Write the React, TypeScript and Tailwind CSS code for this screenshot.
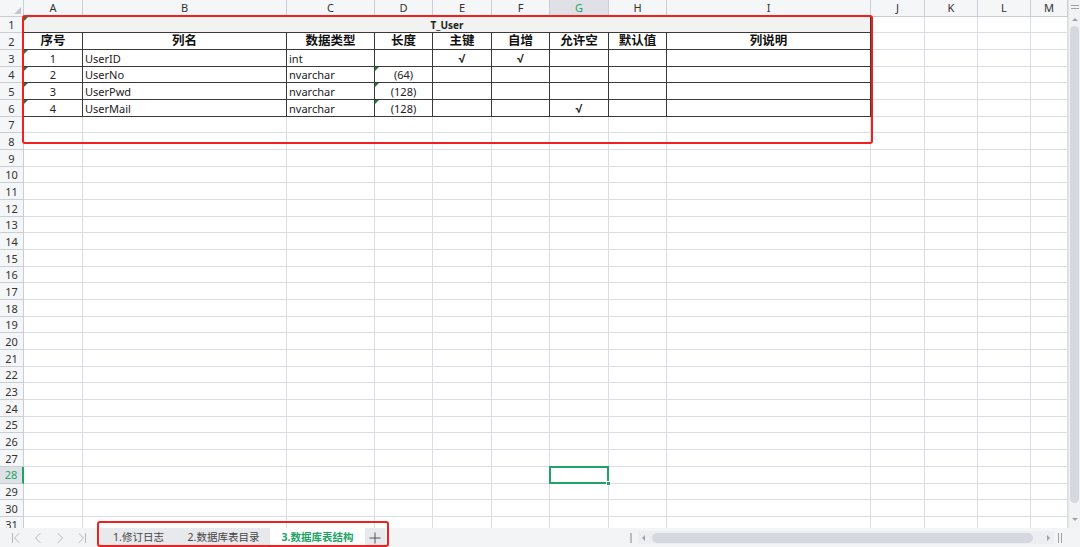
import React from 'react';

const COLS = ['A', 'B', 'C', 'D', 'E', 'F', 'G', 'H', 'I', 'J', 'K', 'L', 'M'];
const ROW_COUNT = 31;

interface Campo {
  seq: string;
  name: string;
  type: string;
  len: string;
  pk: string;
  inc: string;
  nul: string;
}

const HEADERS = ['序号', '列名', '数据类型', '长度', '主键', '自增', '允许空', '默认值', '列说明'];

const CAMPOS: Campo[] = [
  { seq: '1', name: 'UserID', type: 'int', len: '', pk: '√', inc: '√', nul: '' },
  { seq: '2', name: 'UserNo', type: 'nvarchar', len: '(64)', pk: '', inc: '', nul: '' },
  { seq: '3', name: 'UserPwd', type: 'nvarchar', len: '(128)', pk: '', inc: '', nul: '' },
  { seq: '4', name: 'UserMail', type: 'nvarchar', len: '(128)', pk: '', inc: '', nul: '√' },
];

// little green "number stored as text" marker
const Flag = () => (
  <span className="absolute left-0 top-0 h-0 w-0 border-t-[4px] border-r-[4px] border-t-[#1d7a3a] border-r-transparent" />
);

const cellValue = (campo: Campo, col: number): string => {
  switch (col) {
    case 0: return campo.seq;
    case 1: return campo.name;
    case 2: return campo.type;
    case 3: return campo.len;
    case 4: return campo.pk;
    case 5: return campo.inc;
    case 6: return campo.nul;
    default: return '';
  }
};

const Sheet: React.FC = () => {
  const cells: React.ReactNode[] = [];

  // column header row
  cells.push(
    <div key="corner" className="relative border-r border-b border-[#c9cdd5] bg-[#f5f6f8]">
      <span className="absolute right-[2px] bottom-[2px] h-0 w-0 border-b-[7px] border-l-[7px] border-b-[#c3c6cc] border-l-transparent" />
    </div>
  );
  COLS.forEach((c) => {
    const sel = c === 'G';
    cells.push(
      <div
        key={`h-${c}`}
        className={
          sel
            ? 'flex items-center justify-center border-r border-b border-[#c9cdd5] bg-[#dfe1e6] text-[11px] text-[#21a366]'
            : 'flex items-center justify-center border-r border-b border-[#c9cdd5] bg-[#f5f6f8] text-[11px] text-[#333]'
        }
      >
        {c}
      </div>
    );
  });

  for (let r = 1; r <= ROW_COUNT; r++) {
    const sel = r === 28;
    cells.push(
      <div
        key={`r-${r}`}
        className={
          sel
            ? 'flex items-center justify-center border-r-2 border-b border-r-[#21a366] border-b-[#c9cdd5] bg-[#dfe1e6] pt-[2px] text-[11px] text-[#21a366]'
            : 'flex items-center justify-center border-r border-b border-[#c9cdd5] bg-[#f5f6f8] pt-[2px] text-[11px] text-[#333]'
        }
      >
        {r}
      </div>
    );

    if (r === 1) {
      cells.push(
        <div
          key="title"
          className="relative col-span-9 flex items-center justify-center border-r border-b border-[#3a3a3a] bg-[#f2f2f2] pt-[2px] text-[10px] font-bold text-[#222]"
        >
          <Flag />
          T_User
        </div>
      );
      for (let c = 9; c < COLS.length; c++) {
        cells.push(<div key={`c-${r}-${c}`} className="border-r border-b border-[#dadde4]" />);
      }
      continue;
    }

    for (let c = 0; c < COLS.length; c++) {
      const key = `c-${r}-${c}`;
      const inTable = r >= 2 && r <= 6 && c <= 8;

      if (r === 2 && c <= 8) {
        cells.push(
          <div
            key={key}
            className="flex items-center justify-center border-r border-b border-[#3a3a3a] pt-[1px] text-[12.5px] font-bold text-[#111]"
          >
            {HEADERS[c]}
          </div>
        );
        continue;
      }

      if (inTable) {
        const campo = CAMPOS[r - 3];
        const value = cellValue(campo, c);
        const left = c === 1 || c === 2;
        const tick = value === '√';
        const flagged = c === 0 || (c === 3 && campo.len !== '');
        cells.push(
          <div
            key={key}
            className={
              left
                ? 'relative flex items-center justify-start border-r border-b border-[#3a3a3a] pl-[2px] pt-[2px] text-[11px] text-[#222]'
                : tick
                  ? "relative flex items-center justify-center border-r border-b border-[#3a3a3a] pt-[2px] font-['Roboto',sans-serif] text-[12.5px] font-medium text-[#222]"
                  : 'relative flex items-center justify-center border-r border-b border-[#3a3a3a] pt-[2px] text-[11px] text-[#222]'
            }
          >
            {flagged && <Flag />}
            {value}
          </div>
        );
        continue;
      }

      if (r === 28 && c === 6) {
        cells.push(
          <div key={key} className="relative border-r border-b border-[#dadde4]">
            <div className="absolute -left-px -top-px -right-px -bottom-px border-2 border-[#21a366]" />
            <div className="absolute -right-[3px] -bottom-[3px] h-[5px] w-[5px] border border-white bg-[#21a366]" />
          </div>
        );
        continue;
      }

      cells.push(<div key={key} className="border-r border-b border-[#dadde4]" />);
    }
  }

  return (
    <div className="grid min-h-0 flex-1 grid-cols-[24px_59px_204px_88px_58px_59px_58px_59px_58px_204px_54px_53px_53px_1fr] grid-rows-[16.7px_repeat(31,16.68px)] overflow-hidden bg-white">
      {cells}
    </div>
  );
};

const VScroll: React.FC = () => (
  <div className="flex w-[12px] flex-col items-center border-l border-[#e2e4e8] bg-[#f1f2f4]">
    <div className="mt-[5px] flex w-[8px] flex-col gap-[2px]">
      <div className="h-px bg-[#9ea2a8]" />
      <div className="h-px bg-[#9ea2a8]" />
    </div>
    <div className="mt-[9px] h-0 w-0 border-x-[3px] border-b-[3px] border-x-transparent border-b-[#9ea2a8]" />
    <div className="mt-[5px] w-[9px] flex-1 rounded-full bg-[#d5d8de]" />
    <div className="mt-[15px] mb-[7px] h-0 w-0 border-x-[3px] border-t-[3px] border-x-transparent border-t-[#9ea2a8]" />
  </div>
);

const NavIcon: React.FC<{ d: string }> = ({ d }) => (
  <svg width="12" height="12" viewBox="0 0 12 12" fill="none" stroke="#b4b7bd" strokeWidth="1" strokeLinecap="round" strokeLinejoin="round">
    <path d={d} />
  </svg>
);

const BottomBar: React.FC = () => (
  <div className="flex h-[19px] items-center bg-[#f3f4f6] text-[10.5px]">
    <div className="flex w-[100px] items-center gap-[10px] pl-[10px]">
      <NavIcon d="M2.5 1.5v9M9 1.5 4.5 6 9 10.5" />
      <NavIcon d="M8 1.5 3.5 6 8 10.5" />
      <NavIcon d="M4 1.5 8.5 6 4 10.5" />
      <NavIcon d="M3 1.5 7.5 6 3 10.5M9.5 1.5v9" />
    </div>
    <div className="flex h-full items-center">
      <div className="flex h-full w-[77px] items-center justify-center bg-[#e8e9ec] text-[#444]">1.修订日志</div>
      <div className="flex h-full w-[93px] items-center justify-center bg-[#e8e9ec] text-[#444]">2.数据库表目录</div>
      <div className="flex h-full w-[95px] items-center justify-center bg-white font-bold text-[#21a366]">3.数据库表结构</div>
      <div className="flex h-full w-[20px] items-center justify-center bg-[#e8e9ec]">
        <svg width="12" height="12" viewBox="0 0 12 12" stroke="#555" strokeWidth="1">
          <path d="M6 0.5v11M0.5 6h11" />
        </svg>
      </div>
    </div>
    <div className="flex-1" />
    <div className="mr-[6px] h-[10px] w-[2px] bg-[#b9bcc2]" />
    <div className="flex h-[13px] w-[416px] items-center bg-[#eceef1] px-[4px]">
      <div className="h-0 w-0 border-y-[3px] border-r-[3px] border-y-transparent border-r-[#9ea2a8]" />
      <div className="ml-[7px] h-[10px] flex-1 rounded-full bg-[#d5d8de]" />
      <div className="ml-[14px] h-0 w-0 border-y-[3px] border-l-[3px] border-y-transparent border-l-[#9ea2a8]" />
    </div>
    <div className="ml-[4px] mr-[18px] flex gap-[2px]">
      <div className="h-[10px] w-px bg-[#9ea2a8]" />
      <div className="h-[10px] w-px bg-[#9ea2a8]" />
    </div>
  </div>
);

export default function App() {
  return (
    <div className="relative flex h-[547px] w-[1080px] flex-col overflow-hidden bg-white font-['Noto_Sans','Noto_Sans_CJK_SC',sans-serif]">
      <div className="flex min-h-0 flex-1">
        <Sheet />
        <VScroll />
      </div>
      <BottomBar />

      {/* red callouts drawn over the sheet */}
      <div className="pointer-events-none absolute left-[22px] top-[15px] h-[129px] w-[851px] rounded-[3px] border-2 border-[#f0201e]" />
      <div className="pointer-events-none absolute left-[97px] top-[521px] h-[26px] w-[292px] rounded-[3px] border-2 border-[#f0201e]" />
    </div>
  );
}
